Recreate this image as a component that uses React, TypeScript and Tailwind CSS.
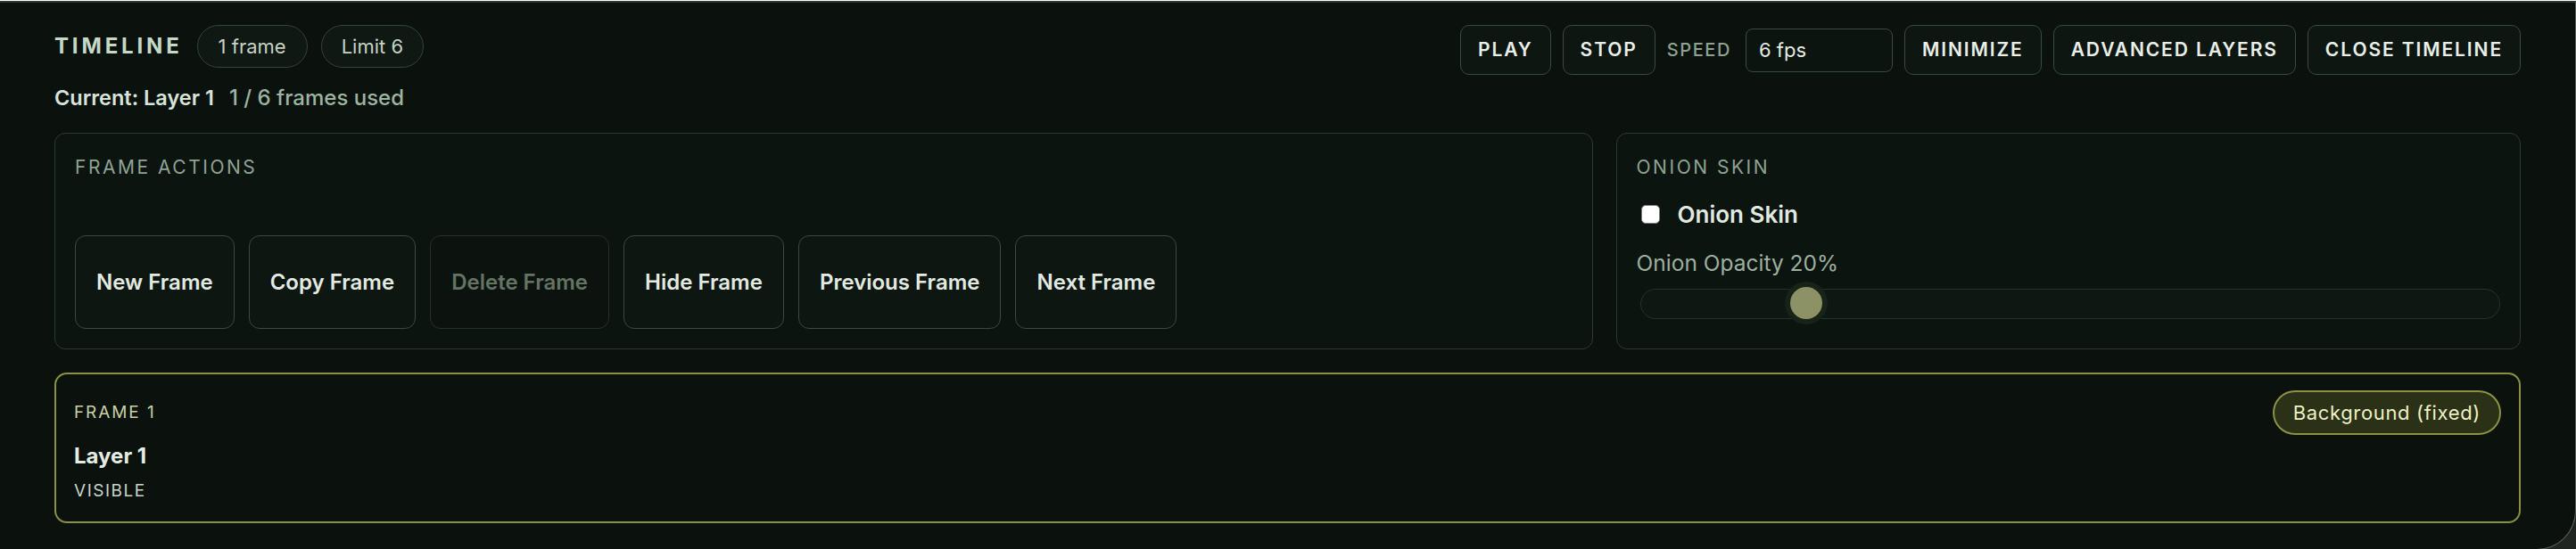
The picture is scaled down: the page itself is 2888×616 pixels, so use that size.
import React from "react";

const headerBtn =
  "h-[56px] px-[19px] rounded-[10px] border border-[#3a4a3d] bg-[#0e1611] text-[21px] font-semibold tracking-[0.09em] text-[#e8efe8]";

const actionBtn =
  "h-[105px] px-[23px] rounded-[12px] border text-[24px] font-semibold";

function HeaderControls() {
  return (
    <div className="flex items-center gap-[13px]">
      <button className={headerBtn}>PLAY</button>
      <button className={headerBtn}>STOP</button>
      <span className="text-[20px] font-medium tracking-[0.08em] text-[#8ea291]">SPEED</span>
      <input
        readOnly
        value="6 fps"
        className="ml-[3px] h-[49px] w-[165px] rounded-[8px] border border-[#3b4b3e] bg-[#0c1410] px-[14px] text-[22px] text-[#e4ece4] outline-none"
      />
      <button className={headerBtn}>MINIMIZE</button>
      <button className={headerBtn}>ADVANCED LAYERS</button>
      <button className={headerBtn}>CLOSE TIMELINE</button>
    </div>
  );
}

function FrameActions() {
  const actions = [
    { label: "New Frame" },
    { label: "Copy Frame" },
    { label: "Delete Frame", disabled: true },
    { label: "Hide Frame" },
    { label: "Previous Frame" },
    { label: "Next Frame" },
  ];
  return (
    <div className="flex flex-col justify-between rounded-[12px] border border-[#2d3b2f] bg-[#0c140f] px-[22px] pt-[23px] pb-[22px]">
      <div className="text-[21px] leading-[30px] tracking-[0.12em] text-[#8fa393]">FRAME ACTIONS</div>
      <div className="flex gap-[16px]">
        {actions.map((a) => (
          <button
            key={a.label}
            disabled={a.disabled}
            className={
              actionBtn +
              (a.disabled
                ? " border-[#263127] bg-[#0c130f] text-[#657365]"
                : " border-[#3a4a3d] bg-[#0e1611] text-[#e2ebe2]")
            }
          >
            {a.label}
          </button>
        ))}
      </div>
    </div>
  );
}

function OnionSkin() {
  return (
    <div className="rounded-[12px] border border-[#2d3b2f] bg-[#0c140f] px-[22px] pt-[23px] pb-[32px]">
      <div className="text-[21px] leading-[30px] tracking-[0.12em] text-[#8fa393]">ONION SKIN</div>
      <label className="mt-[19px] flex h-[36px] items-center gap-[20px]">
        <input
          type="checkbox"
          className="ml-[5px] h-[21px] w-[21px] appearance-none rounded-[5px] border border-[#7b807c] bg-white"
        />
        <span className="text-[26px] font-semibold text-[#e0eae0]">Onion Skin</span>
      </label>
      <div className="mt-[21px] text-[24.5px] leading-[33px] text-[#9cb09f]">Onion Opacity 20%</div>
      <div className="relative mt-[10px] ml-[4px] flex h-[37px] items-center">
        <div className="h-[34px] w-full rounded-full border border-[#253229] bg-[#0e1812]" />
        <div className="absolute left-[17.5%] top-0 h-[36px] w-[36px] rounded-full bg-[#8d9266] shadow-[0_0_0_6px_#172219]" />
      </div>
    </div>
  );
}

function FrameCard() {
  return (
    <div className="mt-[26px] rounded-[14px] border-2 border-[#8a9147] bg-[#0b120e] px-[20px] pt-[18px] pb-[21px]">
      <div className="flex items-center justify-between">
        <div className="text-[19px] tracking-[0.1em] text-[#c9cfa6]">FRAME 1</div>
        <span className="flex h-[50px] items-center rounded-full border-2 border-[#8b9247] bg-[#2a3117] px-[21px] text-[22px] tracking-[0.03em] text-[#eef0c4]">
          Background (fixed)
        </span>
      </div>
      <div className="mt-[7px] text-[24px] font-bold leading-[34px] text-[#e4ece4]">Layer 1</div>
      <div className="mt-[9px] text-[19px] leading-[26px] tracking-[0.08em] text-[#c8d4c8]">VISIBLE</div>
    </div>
  );
}

export default function App() {
  return (
    <div className="h-[616px] bg-[#202522] font-['Inter','Noto_Sans',sans-serif]">
      <div className="h-[616px] overflow-hidden rounded-br-[44px] border-t-2 border-r border-b border-t-[#2b3a2e] border-r-[#5c625d] border-b-[#5c625d] bg-[#0b120e] mt-px px-[61px] pt-[25px]">
        <div className="flex items-start justify-between">
          <div>
            <div className="flex h-[48px] items-center">
              <h1 className="text-[24px] font-bold tracking-[0.16em] text-[#c5d9c8]">TIMELINE</h1>
              <span className="ml-[16px] flex h-[48px] items-center rounded-full border border-[#34443a] bg-[#0f1812] px-[23px] text-[22px] text-[#c5d3c7]">
                1 frame
              </span>
              <span className="ml-[15px] flex h-[48px] items-center rounded-full border border-[#34443a] bg-[#0f1812] px-[22px] text-[22px] text-[#c5d3c7]">
                Limit 6
              </span>
            </div>
            <div className="mt-[18px] flex items-baseline gap-[17px] leading-[32px]">
              <span className="text-[23.5px] font-semibold text-[#d8e4d9]">Current: Layer 1</span>
              <span className="text-[24px] font-medium text-[#9db4a0]">1 / 6 frames used</span>
            </div>
          </div>
          <HeaderControls />
        </div>

        <div className="mt-[23px] grid grid-cols-[1.7fr_1fr] gap-[26px]">
          <FrameActions />
          <OnionSkin />
        </div>

        <FrameCard />
      </div>
    </div>
  );
}
